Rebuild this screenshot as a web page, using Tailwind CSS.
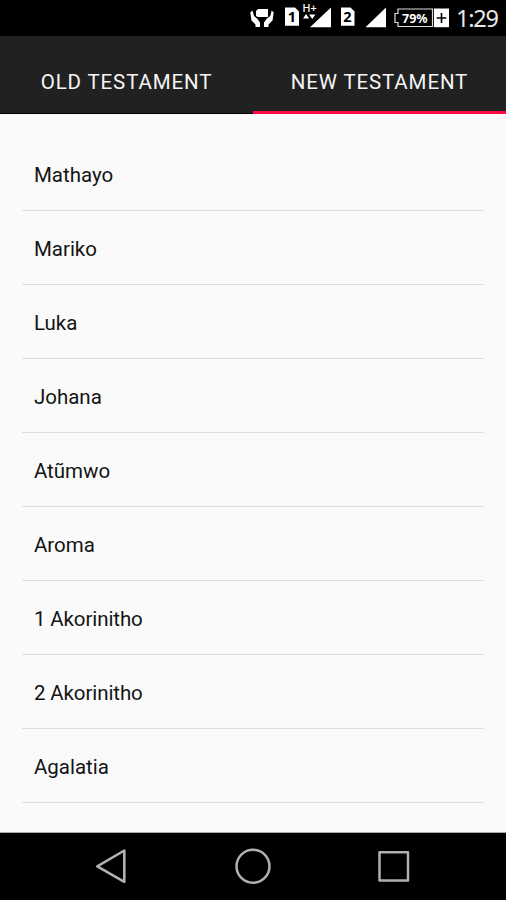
<!DOCTYPE html>
<html lang="ki">
<head>
<meta charset="utf-8">
<title>New Testament</title>
<script src="https://cdn.jsdelivr.net/npm/@tailwindcss/browser@4"></script>
</head>
<body class="w-[506px] h-[900px] flex flex-col overflow-hidden bg-[#fafafa] font-[Roboto,sans-serif]">
<header class="h-9 shrink-0 bg-black flex items-start text-white pl-[250px]">
  <svg class="w-[24px] h-9 shrink-0" viewBox="250 0 24 36" fill="#fff"><path d="M258 9h10v8h-10l-2-1v-5z"/><path d="M252.500 10.500l1.500 5.500 3.500 3 2.500 3.500v4.500h-4.500v-2.500l-4-4-1.200-8zM271.700 10.500l-1.500 5.500-3.700 3-2.500 3.500v4.500h4.500v-2.500l4-4 1.200-8z"/></svg>
  <svg class="w-[58px] h-9 shrink-0 ml-[11px]" viewBox="285 0 58 36" fill="#fff"><path d="M285 7.500h10l4 4v14.200h-14z"/><text x="292" y="22" text-anchor="middle" font-family="Noto Sans" font-weight="700" font-size="14.500" fill="#000">1</text><path d="M310 27.300L331 7.500v19.800z"/><text x="302.600" y="12" font-family="Noto Sans" font-size="11.500" stroke="#fff" stroke-width=".2" textLength="14" lengthAdjust="spacingAndGlyphs">H+</text><path d="M303 18.500l3-4.500 3.200 4.500zM309 14.500h6.500l-3.200 4.500z"/><path d="M309.500 19l2.800 2 3.700-6.500" fill="none" stroke="#000" stroke-width="1"/></svg>
  <svg class="w-[45px] h-9 shrink-0 -ml-[2px]" viewBox="341 0 45 36" fill="#fff"><path d="M341 7.500h9.500l4 4v14.200H341z"/><text x="347.400" y="22" text-anchor="middle" font-family="Noto Sans" font-weight="700" font-size="14.500" fill="#000">2</text><path d="M365.500 27.300L386 7.500v19.800z"/></svg>
  <svg class="w-[56px] h-9 shrink-0 ml-[7px]" viewBox="393 0 56 36" fill="#fff"><path d="M398 9h34.500v17.500H398v-4h-3v-9h3z" fill="none" stroke="#ddd" stroke-width="1.200"/><text x="402" y="22.500" font-family="Noto Sans" font-weight="700" font-size="12.500" textLength="25.500" lengthAdjust="spacingAndGlyphs">79%</text><path d="M434 8.500h15v18.700h-15z"/><path d="M441.500 13v10M436.700 18h9.600" stroke="#000" stroke-width="1.600"/></svg>
  <div class="w-[50px] shrink-0 ml-[7px] h-9 leading-9 text-[23.5px] tracking-[-1.2px] font-['Noto_Sans',sans-serif] text-[#e8e8e8] whitespace-nowrap">1:29</div>
</header>
<nav class="h-[78px] shrink-0 grid grid-cols-2 bg-[#212121] text-[20.5px] leading-6 text-[#f5f5f5] text-center tracking-[0.87px]">
  <div class="pt-[34px] border-b border-black">OLD TESTAMENT</div>
  <div class="pt-[34px] border-b-3 border-[#ff0a45]">NEW TESTAMENT</div>
</nav>
<main class="h-[719px] shrink-0 px-[22.4px] pt-[23px] text-[20.5px] leading-6 text-[#141414] border-b border-[#aaa]">
  <div class="h-[74px] pl-[11.5px] pt-[26px] border-b border-[#dedede]">Mathayo</div>
  <div class="h-[74px] pl-[11.5px] pt-[26px] border-b border-[#dedede]">Mariko</div>
  <div class="h-[74px] pl-[11.5px] pt-[26px] border-b border-[#dedede]">Luka</div>
  <div class="h-[74px] pl-[11.5px] pt-[26px] border-b border-[#dedede]">Johana</div>
  <div class="h-[74px] pl-[11.5px] pt-[26px] border-b border-[#dedede]">Atũmwo</div>
  <div class="h-[74px] pl-[11.5px] pt-[26px] border-b border-[#dedede]">Aroma</div>
  <div class="h-[74px] pl-[11.5px] pt-[26px] border-b border-[#dedede] tracking-[-0.1px]">1 Akorinitho</div>
  <div class="h-[74px] pl-[11.5px] pt-[26px] border-b border-[#dedede] tracking-[-0.1px]">2 Akorinitho</div>
  <div class="h-[74px] pl-[11.5px] pt-[26px] border-b border-[#dedede]">Agalatia</div>
</main>
<footer class="h-[67px] shrink-0 bg-black flex items-center justify-center gap-[100px]">
  <svg class="w-10 h-[67px]" viewBox="93 833 40 67" fill="none" stroke="#b0b0b0" stroke-width="2.600" stroke-linejoin="round"><path d="M97.300 866.300L124.300 850.500v31.300z"/></svg>
  <svg class="w-10 h-[67px]" viewBox="233 833 40 67" fill="none" stroke="#b0b0b0" stroke-width="2.500"><circle cx="253" cy="866.200" r="16.500"/></svg>
  <svg class="w-10 h-[67px]" viewBox="373 833 40 67" fill="none" stroke="#b0b0b0" stroke-width="2.500" stroke-linejoin="round"><path d="M379.500 852.200h28.500v28.300h-28.500z"/></svg>
</footer>
</body>
</html>
